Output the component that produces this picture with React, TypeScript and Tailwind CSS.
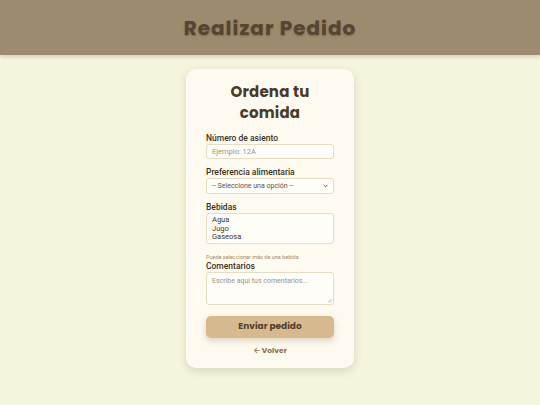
import React from "react";

const heading = { fontFamily: "Poppins, Inter, 'Open Sans', sans-serif" };

export default function App() {
  return (
    <div
      className="min-h-[405px] bg-[#f5f4dc] flex flex-col"
      style={{ fontFamily: "Roboto, 'Liberation Sans', sans-serif" }}
    >
      {/* Header */}
      <header className="h-[55px] bg-[#9c8b6e] flex items-center justify-center shadow-[0_2px_4px_rgba(0,0,0,0.15)]">
        <h1
          className="text-[20px] font-bold tracking-[1px] text-[#574530] [text-shadow:0_1px_2px_rgba(0,0,0,0.25)]"
          style={heading}
        >
          Realizar Pedido
        </h1>
      </header>

      {/* Card */}
      <main className="flex justify-center pt-[14px]">
        <div className="w-[168px] bg-[#fefaf0] rounded-[10px] shadow-[0_3px_10px_rgba(0,0,0,0.12)] px-[20px] pt-[12px] pb-[12px]">
          <h2
            className="text-center text-[15px] leading-[21px] font-bold tracking-[0.2px] text-[#4a3a28] mb-[10px]"
            style={heading}
          >
            Ordena tu
            <br />
            comida
          </h2>

          <form className="flex flex-col">
            <label className="text-[8.5px] leading-[10px] font-medium text-[#3d3020] mb-[1px]">Número de asiento</label>
            <input
              placeholder="Ejemplo: 12A"
              className="h-[15px] w-full rounded-[3px] border border-[#e6dcc4] bg-[#fffdf7] px-[5px] text-[7.5px] placeholder:text-[#9a9488] outline-none"
            />

            <label className="text-[8.5px] leading-[10px] font-medium text-[#3d3020] mt-[8px] mb-[1px]">Preferencia alimentaria</label>
            <div className="h-[16px] w-full rounded-[3px] border border-[#e6dcc4] bg-[#fffdf7] px-[5px] flex items-center justify-between text-[7px] text-[#5a5248]">
              <span>-- Seleccione una opción --</span>
              <svg width="5" height="4" viewBox="0 0 6 4">
                <path d="M0.8 0.8 L3 3 L5.2 0.8" stroke="#444" strokeWidth="1.1" fill="none" />
              </svg>
            </div>

            <label className="text-[8.5px] leading-[10px] font-medium text-[#3d3020] mt-[8px] mb-[1px]">Bebidas</label>
            <div className="h-[31px] w-full rounded-[3px] border border-[#e6dcc4] bg-[#fffdf7] px-[5px] pt-[2px] text-[7.5px] leading-[8.5px] text-[#3d3630]">
              <div>Agua</div>
              <div>Jugo</div>
              <div>Gaseosa</div>
            </div>

            <span className="text-[5.5px] text-[#a88a68] mt-[10px] leading-[7px]">Puede seleccionar más de una bebida</span>
            <label className="text-[8.5px] font-medium text-[#3d3020] mb-[1px] leading-[10px]">Comentarios</label>
            <div className="relative h-[33px] w-full rounded-[3px] border border-[#e6dcc4] bg-[#fffdf7] px-[5px] pt-[3px] text-[7px] text-[#9a9488]">
              Escribe aquí tus comentarios...
              <svg className="absolute right-[1px] bottom-[1px]" width="5" height="5" viewBox="0 0 5 5">
                <path d="M4.5 1 L1 4.5 M4.5 3 L3 4.5" stroke="#999" strokeWidth="0.6" />
              </svg>
            </div>

            <div
              className="mt-[11px] h-[22px] w-full rounded-[5px] bg-[#d6b98e] flex items-center justify-center text-[9px] font-bold text-[#54422e] shadow-[0_3px_6px_rgba(150,120,70,0.3)]"
              style={heading}
            >
              Enviar pedido
            </div>

            <div
              className="mt-[8px] text-center text-[7.5px] leading-[10px] font-bold text-[#8b6f4e]"
              style={heading}
            >
              ← Volver
            </div>
          </form>
        </div>
      </main>
    </div>
  );
}
